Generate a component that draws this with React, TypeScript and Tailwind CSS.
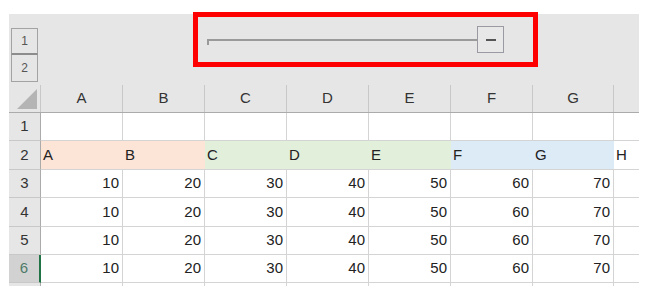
import React from "react";

const cols = [
  { key: "A", w: "w-[82px]" },
  { key: "B", w: "w-[82px]" },
  { key: "C", w: "w-[82px]" },
  { key: "D", w: "w-[82px]" },
  { key: "E", w: "w-[82px]" },
  { key: "F", w: "w-[82px]" },
  { key: "G", w: "w-[81px]" },
];

const rowHeights = ["h-[28px]", "h-[29px]", "h-[28px]", "h-[29px]", "h-[28px]", "h-[28px]"];

const fills: Record<string, string> = {
  A: "bg-[#fce4d6]",
  B: "bg-[#fce4d6]",
  C: "bg-[#e2efda]",
  D: "bg-[#e2efda]",
  E: "bg-[#e2efda]",
  F: "bg-[#ddebf7]",
  G: "bg-[#ddebf7]",
};

const values = [10, 20, 30, 40, 50, 60, 70];

function OutlineButtons() {
  return (
    <div className="flex flex-col pt-[14px] pl-[2px]">
      <div className="flex h-[27px] w-[27px] items-center justify-center border border-b-2 border-[#a3a3a3] border-b-[#8c8c8c] text-[12px] text-[#555]">
        1
      </div>
      <div className="flex h-[27px] w-[27px] items-center justify-center border border-t-0 border-[#a3a3a3] text-[12px] text-[#555]">
        2
      </div>
    </div>
  );
}

function Slider() {
  return (
    <div className="absolute left-[193px] top-[12px] h-[55px] w-[345px] border-[5px] border-[#ff0000]">
      <div className="flex h-full items-center pl-[9px]">
        <div className="relative h-[2px] w-[270px] bg-[#9a9a9a]">
          <div className="absolute left-0 top-0 h-[6px] w-[2px] bg-[#9a9a9a]" />
        </div>
        <div className="flex h-[27px] w-[27px] items-center justify-center border border-[#9a9aa2] bg-[#e8e8e8]">
          <div className="h-[2px] w-[10px] bg-[#555]" />
        </div>
      </div>
    </div>
  );
}

export default function App() {
  return (
    <div
      className="relative h-[302px] w-[666px] bg-white pl-[9px] pt-[14px]"
      style={{ fontFamily: '"Liberation Sans", "Noto Sans CJK JP", sans-serif' }}
    >
      <div className="w-[630px] bg-[#e6e6e6]">
        {/* outline area */}
        <div className="h-[71px]">
          <OutlineButtons />
        </div>

        {/* column headers */}
        <div className="flex h-[28px] border-b border-[#ababab] text-[15px] text-[#333]">
          <div className="relative w-[32px] border-r border-[#c8c8c8]">
            <div className="absolute bottom-[3px] right-[3px] h-0 w-0 border-b-[20px] border-l-[20px] border-b-[#b4b4b4] border-l-transparent" />
          </div>
          {cols.map((c) => (
            <div key={c.key} className={`${c.w} flex items-center justify-center border-r border-[#c8c8c8]`}>
              {c.key}
            </div>
          ))}
          <div className="w-[25px]" />
        </div>

        {/* rows */}
        {rowHeights.map((h, i) => {
          const r = i + 1;
          const active = r === 6;
          return (
            <div key={r} className={`flex ${h} text-[15px] text-[#222]`}>
              <div
                className={`flex w-[32px] items-center justify-center border-b ${
                  active
                    ? "border-r-2 border-b-[#c8c8c8] border-r-[#217346] bg-[#d2d2d2] text-[#4d7b68]"
                    : "border-r border-[#ababab] border-b-[#c8c8c8] text-[#333]"
                }`}
              >
                {r}
              </div>
              {cols.map((c, ci) => {
                if (r === 2) {
                  return (
                    <div
                      key={c.key}
                      className={`${c.w} ${fills[c.key]} flex items-center border-b border-[#d4d4d4] pl-[2px]`}
                    >
                      {c.key}
                    </div>
                  );
                }
                return (
                  <div
                    key={c.key}
                    className={`${c.w} flex items-center justify-end border-b border-r border-[#d4d4d4] bg-white pr-[3px]`}
                  >
                    {r >= 3 ? values[ci] : ""}
                  </div>
                );
              })}
              <div className="flex w-[25px] items-center border-b border-[#d4d4d4] bg-white pl-[2px]">
                {r === 2 ? "H" : ""}
              </div>
            </div>
          );
        })}

        {/* partial next row */}
        <div className="flex h-[3px]">
          <div className="w-[32px] border-r border-[#ababab] bg-[#e6e6e6]" />
          {cols.map((c) => (
            <div key={c.key} className={`${c.w} border-r border-[#d4d4d4] bg-white`} />
          ))}
          <div className="w-[25px] bg-white" />
        </div>
      </div>

      <Slider />
    </div>
  );
}
